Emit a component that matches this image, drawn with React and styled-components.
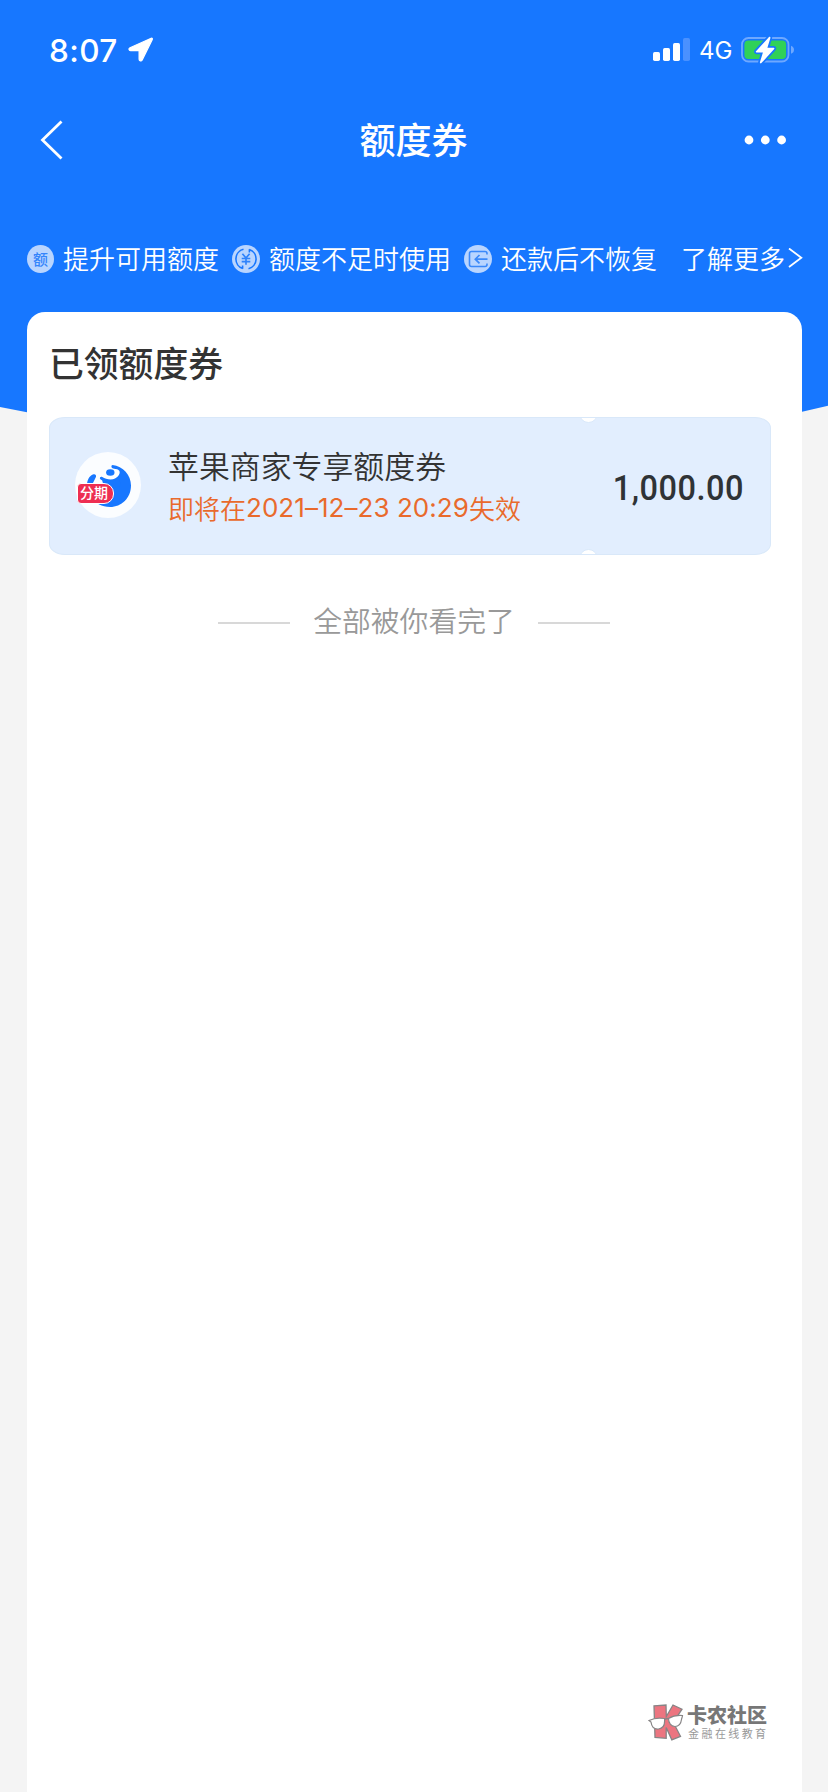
import React from "react";
import styled, { createGlobalStyle } from "styled-components";

const App = () => {
  return (
    <>
      <GlobalStyle />
      <Page>
        <Hero>
          <StatusBar>
            <Time>8:07</Time>
            <LocationIcon />
            <StatusRight>
              <SignalIcon />
              <Network>4G</Network>
              <BatteryIcon />
            </StatusRight>
          </StatusBar>
          <NavBar>
            <BackIcon />
            <NavTitle>额度券</NavTitle>
            <MoreIcon />
          </NavBar>
          <Features>
            <QuotaIcon>额</QuotaIcon>
            <FeatureText $width={169}>提升可用额度</FeatureText>
            <YuanIcon />
            <FeatureText $width={195}>额度不足时使用</FeatureText>
            <RepayIcon />
            <FeatureText $width={180}>还款后不恢复</FeatureText>
            <MoreLink>了解更多</MoreLink>
            <ChevronIcon />
          </Features>
        </Hero>
        <Card>
          <SectionTitle>已领额度券</SectionTitle>
          <Coupon>
            <Notch $side="top" />
            <Notch $side="bottom" />
            <Brand>
              <BrandIcon />
              <BrandTag>分期</BrandTag>
            </Brand>
            <CouponInfo>
              <CouponName>苹果商家专享额度券</CouponName>
              <CouponExpiry>
                即将在<ExpiryDate>2021–12–23 20:29</ExpiryDate>失效
              </CouponExpiry>
            </CouponInfo>
            <Amount>1,000.00</Amount>
          </Coupon>
          <ListEnd>
            <EndLine />
            <EndText>全部被你看完了</EndText>
            <EndLine />
          </ListEnd>
          <Watermark>
            <WatermarkLogo />
            <div>
              <WatermarkName>卡农社区</WatermarkName>
              <WatermarkSlogan>金融在线教育</WatermarkSlogan>
            </div>
          </Watermark>
        </Card>
      </Page>
    </>
  );
};

const LocationIcon = () => (
  <svg width="26" height="26" viewBox="0 0 26 26">
    <path
      d="M23.2 1.2 2 10.7c-1.7.8-1.2 2.9.5 2.9h8.1c.3 0 .5.2.5.5v8.2c0 1.8 2.3 2.3 3.1.6l10-20.2c.5-1.1-.1-1.9-1-1.500z"
      fill="#fff"
      stroke="#fff"
      strokeWidth="1.2"
      strokeLinejoin="round"
    />
  </svg>
);

const SignalIcon = () => (
  <svg width="38" height="24" viewBox="0 0 38 24">
    <rect x="0" y="14" width="7" height="9" rx="1.7" fill="#fff" />
    <rect x="10" y="10" width="7" height="13" rx="1.7" fill="#fff" />
    <rect x="20" y="5" width="7" height="18" rx="1.7" fill="#fff" />
    <rect x="30" y="0" width="7" height="23" rx="1.7" fill="#4a91ff" />
  </svg>
);

const BatteryIcon = () => (
  <svg width="54" height="28" viewBox="0 0 54 28">
    <rect x="1" y="2" width="46.5" height="23.5" rx="6.5" fill="none" stroke="#6ea8ff" strokeWidth="1.8" />
    <path d="M50 9.7c2.2.8 3 2.3 3 4s-.8 3.3-3 4z" fill="#6ea8ff" />
    <rect x="3.4" y="4.5" width="41.7" height="18.5" rx="4" fill="#30d158" />
    <path
      d="M28 1 15 15.2c-.5.6-.1 1.3.6 1.3h6.3l-3 9.8c-.3 1 .9 1.5 1.5.8L33.2 13c.5-.6.1-1.3-.6-1.3h-6.2l3-9.8C29.6.7 28.6.3 28 1z"
      fill="#fff"
      stroke="#1777ff"
      strokeWidth="3.5"
      paintOrder="stroke"
    />
  </svg>
);

const BackIcon = () => (
  <svg width="24" height="40" viewBox="0 0 24 40">
    <path d="M22.5 1.5 3.5 20 22.5 38.5" fill="none" stroke="#fff" strokeWidth="2.8" />
  </svg>
);

const MoreIcon = () => (
  <svg width="44" height="12" viewBox="0 0 44 12">
    <circle cx="6" cy="6" r="4.4" fill="#fff" />
    <circle cx="22.3" cy="6" r="4.4" fill="#fff" />
    <circle cx="38.6" cy="6" r="4.4" fill="#fff" />
  </svg>
);

const YuanIcon = () => (
  <svg width="28" height="28" viewBox="0 0 28 28">
    <circle cx="14" cy="14" r="14" fill="#b9d5ff" />
    <path
      d="M11.5 4.3A10 10 0 0 0 10.8 23.5M16.5 23.7A10 10 0 0 0 17.2 4.5M10.6 20.6v3.2M17.4 4.2v3.2"
      fill="none"
      stroke="#1777ff"
      strokeWidth="1.6"
    />
    <path
      d="M10.4 8.8 14 13l3.6-4.2M14 13v6.8M9.7 13.5h8.6M9.7 16.6h8.6"
      fill="none"
      stroke="#2f83fb"
      strokeWidth="1.7"
    />
  </svg>
);

const RepayIcon = () => (
  <svg width="28" height="28" viewBox="0 0 28 28">
    <circle cx="14" cy="14" r="14" fill="#b9d5ff" />
    <path
      d="M23 9.5V8.5a2 2 0 0 0-2-2H7.5a2 2 0 0 0-2 2v11a2 2 0 0 0 2 2H21a2 2 0 0 0 2-2V18.5"
      fill="none"
      stroke="#3b89fa"
      strokeWidth="1.6"
    />
    <path d="M23.5 14.2H11.5M15.5 10l-4.2 4.2 4.2 4.2" fill="none" stroke="#3b89fa" strokeWidth="1.7" />
  </svg>
);

const ChevronIcon = () => (
  <svg width="15" height="22" viewBox="0 0 15 22">
    <path d="M1 .5 13.3 9.7 1 19" fill="none" stroke="#fff" strokeWidth="1.8" />
  </svg>
);

const BrandIcon = () => (
  <svg width="66" height="66" viewBox="0 0 66 66">
    <circle cx="33" cy="33" r="33" fill="#fbfdff" />
    <path
      d="M37.5 13C48 14 56 23 56 33.5C56 46 46.5 55 35 55C27 55 20 51 17 46L28 34C31 32 34 32 36 31.6C31 30.7 27.5 29 25.4 27.2C24 25.8 25.7 24 27.3 25C30.5 27 36 28.5 40 26.5C44.5 24 46 20 43.5 18C42 16.8 39.5 17 37.5 16.2C36 15.5 36 13 37.5 13z"
      fill="#1777ff"
    />
    <path d="M27 28C32 31 39 31 44 26L46 34L30 38z" fill="#1777ff" />
    <ellipse cx="35.3" cy="20.5" rx="4.2" ry="3.2" fill="#1777ff" />
    <path d="M12 32c.5-5 3-9 6.5-9.8 2-.4 3.2 1.2 2.3 3L17.5 32z" fill="#1777ff" />
  </svg>
);

const WatermarkLogo = () => (
  <svg width="36" height="37" viewBox="0 0 36 37">
    <path
      d="M6 1.8 18 1l.3 11.5L25 1l9 4.2-8.700 13.300 7.200 13.800-8.700 3.500-5.600-12.300v10.800L7 33.500z"
      fill="#ec7580"
      stroke="#878586"
      strokeWidth="1.3"
    />
    <path
      d="M1 16.500c4-2 10-3 15.500-2 .7 6.500-1.500 10-6 10.500C5.500 25.500 3.500 22 3 18zM20.500 14.500c4-2.500 9-3.500 14-3-.2 2-.8 2.300-1 4-.6 4.500-3 7-6.500 7-4 0-6.500-3.500-6.500-8z"
      fill="#fff"
      stroke="#878586"
      strokeWidth="1.2"
    />
    <path d="M16.500 15.500c1.500-1 2.500-1 4-1" fill="none" stroke="#878586" strokeWidth="1.3" />
  </svg>
);

const GlobalStyle = createGlobalStyle`
  * {
    box-sizing: border-box;
  }
  body {
    margin: 0;
    background: #f4f4f4;
    font-family: "Noto Sans CJK SC", sans-serif;
  }
  svg {
    display: block;
    flex-shrink: 0;
  }
`;

const Page = styled.div`
  display: flex;
  flex-direction: column;
  width: 828px;
  height: 1792px;
  overflow: hidden;
`;

const Hero = styled.header`
  flex-shrink: 0;
  height: 413px;
  background: #1777ff;
  color: #fff;
  /* the sides rise slightly toward the screen edges */
  clip-path: polygon(0 0, 100% 0, 100% 405.7px, 801px 412px, 27px 412.3px, 0 407px);
`;

const StatusBar = styled.div`
  display: flex;
  align-items: center;
  height: 100px;
  padding: 0 33px 0 49px;
`;

const Time = styled.div`
  width: 79px;
  font-family: Inter, sans-serif;
  font-size: 31.5px;
  font-weight: 500;
  letter-spacing: 0.4px;
`;

const StatusRight = styled.div`
  display: flex;
  align-items: center;
  margin-left: auto;
`;

const Network = styled.div`
  width: 42px;
  margin-left: 8px;
  font-family: Inter, sans-serif;
  font-size: 24px;
`;

const NavBar = styled.nav`
  display: flex;
  align-items: center;
  justify-content: space-between;
  height: 80px;
  padding: 0 41px 0 39px;
`;

const NavTitle = styled.h1`
  margin: 0 0 5px 21px;
  font-size: 36px;
  font-weight: 500;
  line-height: 52px;
`;

const Features = styled.div`
  display: flex;
  align-items: center;
  height: 40px;
  margin-top: 59px;
  padding-left: 27px;
`;

const QuotaIcon = styled.span`
  flex-shrink: 0;
  width: 27px;
  height: 28px;
  border-radius: 50%;
  background: #b9d5ff;
  color: #3585fb;
  font-size: 15px;
  font-weight: 500;
  line-height: 27px;
  text-align: center;
`;

const FeatureText = styled.span`
  flex-shrink: 0;
  width: ${(props) => props.$width}px;
  margin: 0 0 2px 9px;
  font-size: 26px;
  font-weight: 350;
  line-height: 40px;
  white-space: nowrap;
`;

const MoreLink = styled.span`
  width: 107px;
  margin-bottom: 3px;
  font-size: 26px;
  font-weight: 350;
  line-height: 40px;
  white-space: nowrap;
`;

const Card = styled.main`
  position: relative;
  display: flex;
  flex: 1;
  flex-direction: column;
  margin: -101px 26.5px 0;
  padding: 24px 31px 51px 22.5px;
  border-radius: 18px 18px 0 0;
  background: #fff;
`;

const SectionTitle = styled.h2`
  margin: 0 0 29px;
  color: #333;
  font-size: 34.8px;
  font-weight: 500;
  line-height: 52px;
`;

const Coupon = styled.section`
  position: relative;
  display: flex;
  align-items: center;
  height: 138px;
  padding: 0 26px 0 25px;
  border: 1px solid #d9e8f9;
  border-radius: 16px / 11px;
  background: #e2eefe;
  overflow: hidden;
`;

const Notch = styled.span`
  position: absolute;
  left: 529px;
  ${(props) => props.$side}: -14px;
  width: 19px;
  height: 19px;
  border: 1px solid #d9e8f9;
  border-radius: 50%;
  background: #fff;
`;

const Brand = styled.div`
  position: relative;
  flex-shrink: 0;
  width: 66px;
  height: 66px;
  margin-top: -2px;
`;

const BrandTag = styled.span`
  position: absolute;
  top: 31px;
  left: 2px;
  width: 37px;
  height: 21px;
  padding-left: 2px;
  border: 1.5px solid #fff;
  border-radius: 4px 10px 10px 4px;
  background: #ee2e52;
  color: #fff;
  font-size: 14px;
  font-weight: 500;
  line-height: 17px;
  white-space: nowrap;
`;

const CouponInfo = styled.div`
  margin-left: 27px;
`;

const CouponName = styled.div`
  color: #333;
  font-size: 30.9px;
  font-weight: 350;
  line-height: 43px;
  white-space: nowrap;
`;

const CouponExpiry = styled.div`
  display: flex;
  color: #e96a2c;
  font-size: 26px;
  font-weight: 350;
  line-height: 44px;
  white-space: nowrap;
`;

const ExpiryDate = styled.span`
  font-family: Inter, sans-serif;
  font-weight: 400;
  letter-spacing: 0.05px;
`;

const Amount = styled.div`
  margin: 5px 0 0 auto;
  color: #2f3336;
  font-family: Roboto, sans-serif;
  font-size: 35px;
  font-weight: 500;
  letter-spacing: 0.5px;
  transform: scaleX(0.93);
  transform-origin: right;
`;

const ListEnd = styled.div`
  display: flex;
  align-items: center;
  justify-content: center;
  gap: 23px;
  height: 40px;
  margin: 47px 0 0 8.5px;
`;

const EndLine = styled.span`
  width: 72px;
  height: 2px;
  margin-top: 2px;
  background: #d8d8d8;
`;

const EndText = styled.span`
  margin-bottom: 4px;
  color: #999;
  font-size: 28.8px;
  font-weight: 350;
  line-height: 40px;
`;

const Watermark = styled.footer`
  display: flex;
  align-items: center;
  align-self: flex-end;
  gap: 3px;
  margin: auto 2px 0 0;
  font-family: "Liberation Sans", "Noto Sans CJK SC", sans-serif;
`;

const WatermarkName = styled.div`
  color: #777;
  font-size: 20px;
  font-weight: 900;
  line-height: 22px;
`;

const WatermarkSlogan = styled.div`
  padding-left: 1px;
  color: #999;
  font-size: 11px;
  letter-spacing: 2.4px;
  line-height: 14px;
`;

export default App;
